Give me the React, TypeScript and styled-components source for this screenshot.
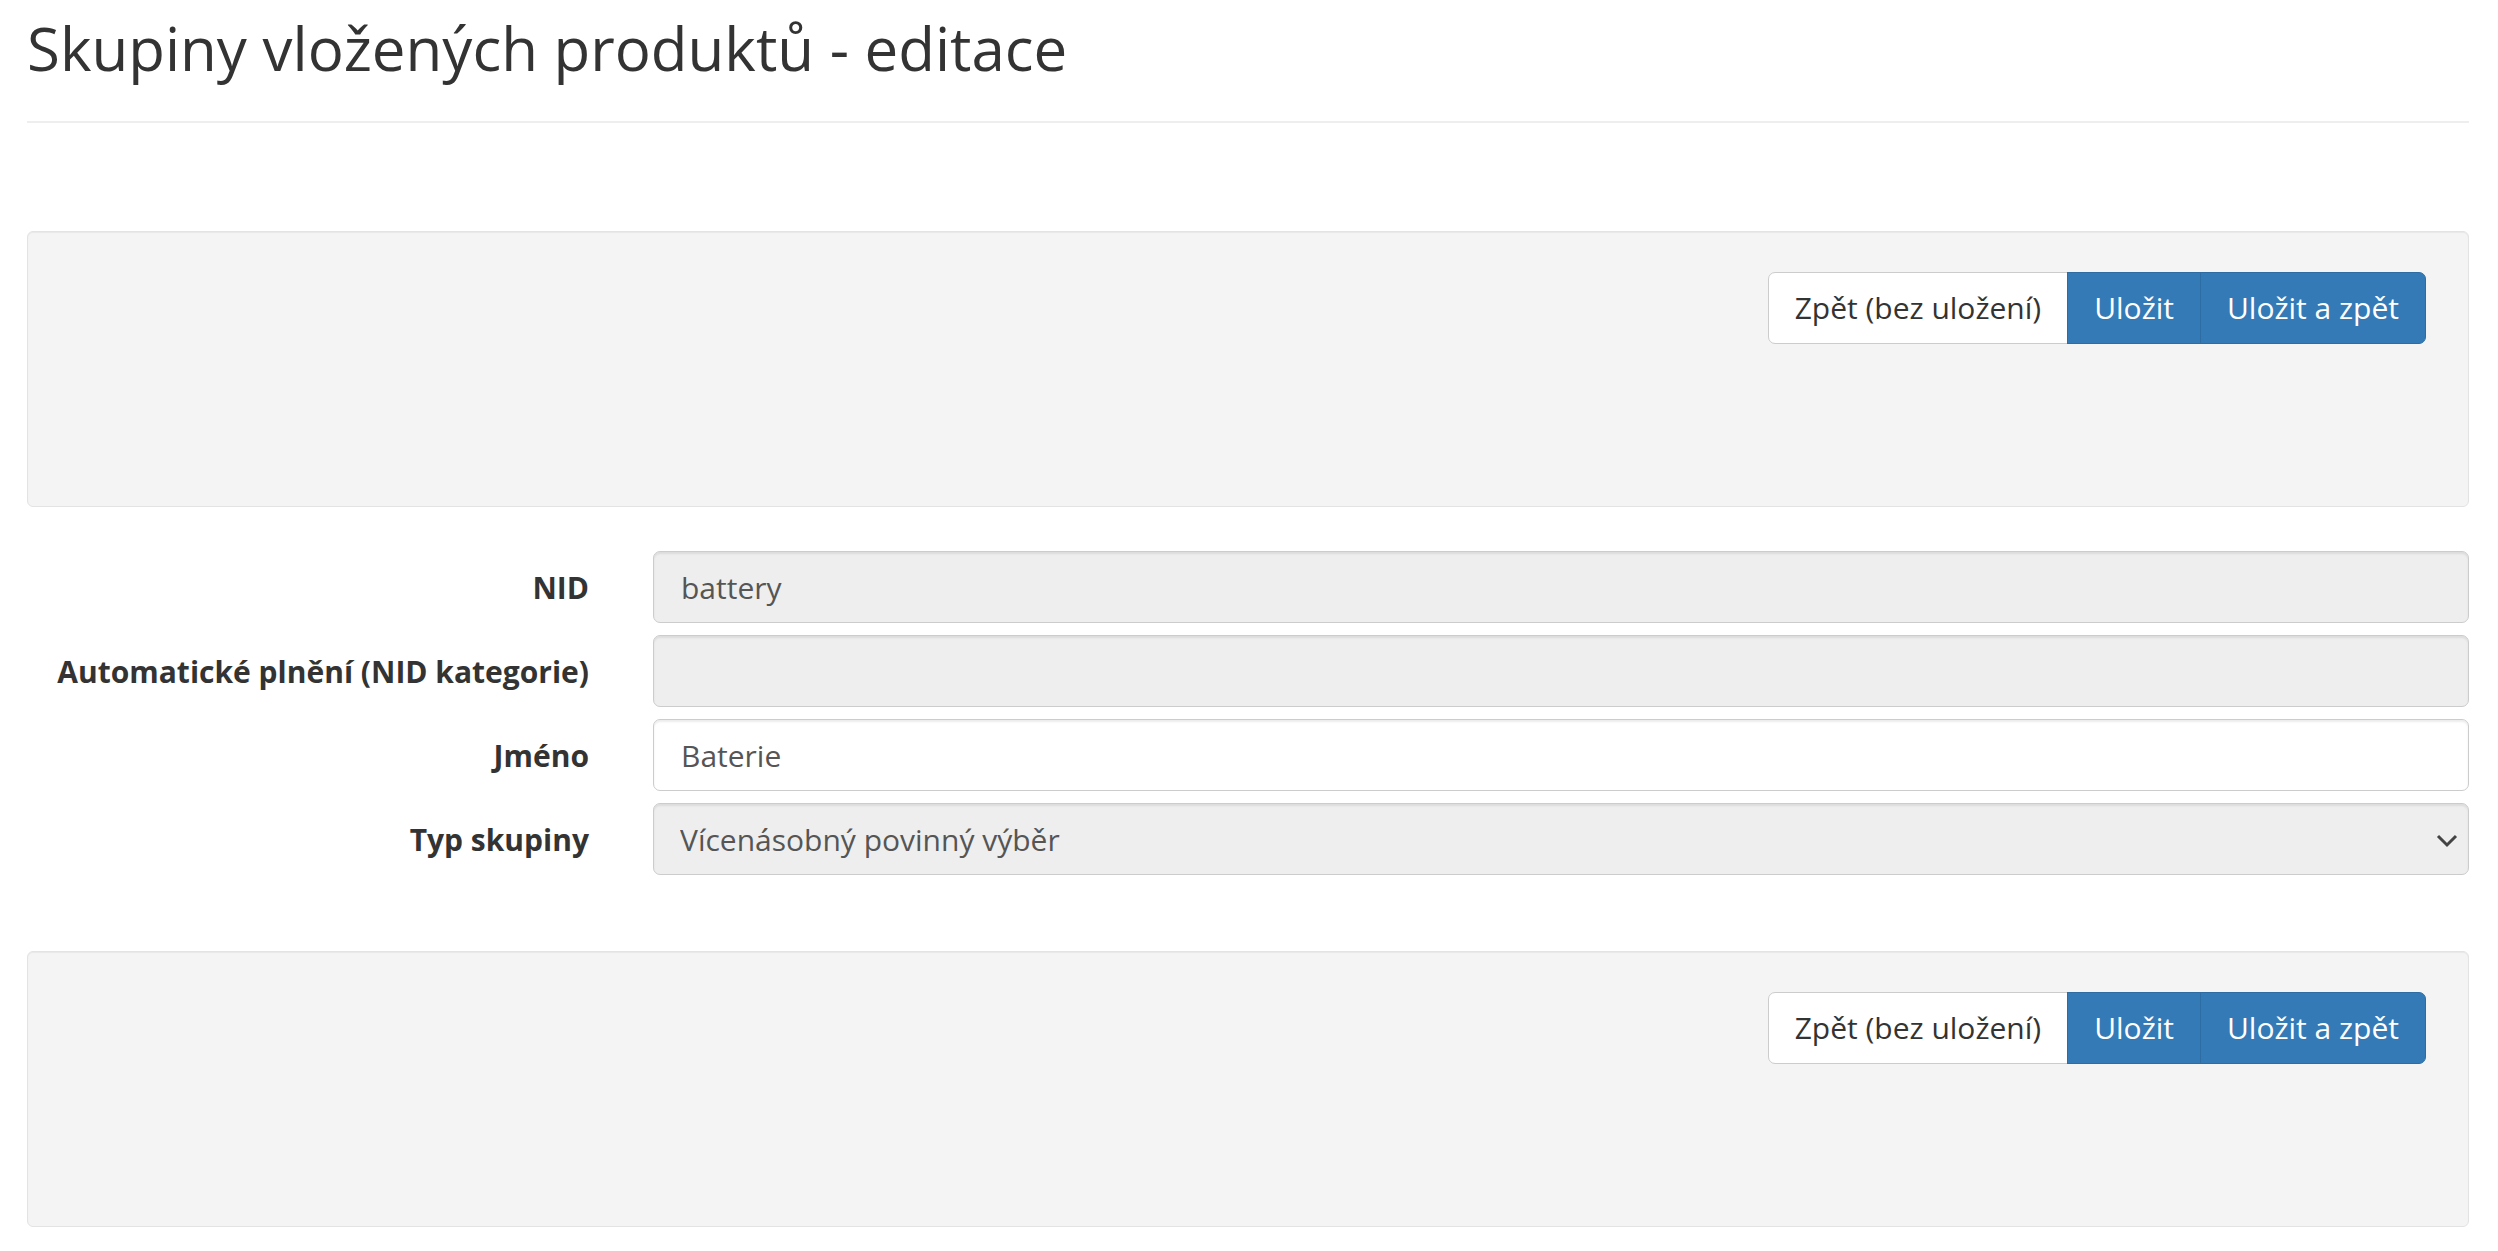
import * as React from 'react';
import styled, { createGlobalStyle } from 'styled-components';

const GlobalStyle = createGlobalStyle`
  html, body {
    margin: 0;
    padding: 0;
    background: #fff;
  }
  body {
    font-family: "Open Sans", "Noto Sans", sans-serif;
    color: #333;
  }
  * {
    box-sizing: border-box;
  }
`;

const Page = styled.div`
  padding: 0 29px 24px 27px;
`;

const PageHeader = styled.div`
  padding: 16px 0 40px 0;
  border-bottom: 2px solid #eee;
  margin-bottom: 108px;
`;

const Title = styled.h1`
  margin: 0;
  font-size: 60px;
  line-height: 65px;
  font-weight: 400;
  color: #333;
`;

const Well = styled.div`
  height: 276px;
  padding: 40px 42px;
  background: #f4f4f4;
  border: 1px solid #e3e3e3;
  border-radius: 6px;
  box-shadow: inset 0 1px 1px rgba(0, 0, 0, 0.05);
  display: flex;
  justify-content: flex-end;
  align-items: flex-start;
`;

const ButtonGroup = styled.div`
  display: flex;
`;

const Button = styled.button<{ $primary?: boolean }>`
  font-family: "Open Sans", "Noto Sans", sans-serif;
  font-size: 30px;
  line-height: 38px;
  padding: 16px 26px;
  margin: 0;
  border: 1px solid ${(p) => (p.$primary ? '#2e6da4' : '#ccc')};
  background: ${(p) => (p.$primary ? '#337ab7' : '#fff')};
  color: ${(p) => (p.$primary ? '#fff' : '#333')};
  border-radius: 0;
  cursor: pointer;
  & + & {
    margin-left: -1px;
  }
  &:first-child {
    border-radius: 7px 0 0 7px;
  }
  &:last-child {
    border-radius: 0 7px 7px 0;
  }
`;

const Form = styled.div`
  display: grid;
  grid-template-columns: 562px 1fr;
  column-gap: 64px;
  row-gap: 12px;
  margin: 44px 0 76px 0;
`;

const Label = styled.label`
  display: flex;
  align-items: center;
  justify-content: flex-end;
  font-size: 30px;
  font-weight: 700;
  color: #333;
  white-space: nowrap;
`;

const Input = styled.input<{ $readOnly?: boolean }>`
  display: block;
  width: 100%;
  height: 72px;
  padding: 0 27px;
  font-family: "Open Sans", "Noto Sans", sans-serif;
  font-size: 30px;
  color: #555;
  background: ${(p) => (p.$readOnly ? '#eee' : '#fff')};
  border: 1px solid #ccc;
  border-radius: 7px;
  box-shadow: inset 0 2px 2px rgba(0, 0, 0, 0.075);
  outline: none;
`;

const SelectWrap = styled.div`
  position: relative;
`;

const Select = styled.select`
  display: block;
  width: 100%;
  height: 72px;
  padding: 0 60px 0 26px;
  font-family: "Open Sans", "Noto Sans", sans-serif;
  font-size: 30px;
  color: #555;
  background: #eee;
  border: 1px solid #ccc;
  border-radius: 7px;
  box-shadow: inset 0 2px 2px rgba(0, 0, 0, 0.075);
  appearance: none;
  -webkit-appearance: none;
  outline: none;
`;

const Chevron = styled.svg`
  position: absolute;
  right: 11px;
  top: 31px;
  pointer-events: none;
`;

function Actions() {
  return (
    <Well>
      <ButtonGroup>
        <Button>Zpět (bez uložení)</Button>
        <Button $primary>Uložit</Button>
        <Button $primary>Uložit a zpět</Button>
      </ButtonGroup>
    </Well>
  );
}

export default function App() {
  return (
    <Page>
      <GlobalStyle />
      <PageHeader>
        <Title>Skupiny vložených produktů - editace</Title>
      </PageHeader>
      <Actions />
      <Form>
        <Label>NID</Label>
        <Input $readOnly readOnly defaultValue="battery" />
        <Label>Automatické plnění (NID kategorie)</Label>
        <Input $readOnly readOnly defaultValue="" />
        <Label>Jméno</Label>
        <Input defaultValue="Baterie" />
        <Label>Typ skupiny</Label>
        <SelectWrap>
          <Select defaultValue="multi">
            <option value="multi">Vícenásobný povinný výběr</option>
          </Select>
          <Chevron width="22" height="14" viewBox="0 0 22 14">
            <polyline points="2,2 11,11 20,2" fill="none" stroke="#444" strokeWidth="3" />
          </Chevron>
        </SelectWrap>
      </Form>
      <Actions />
    </Page>
  );
}
